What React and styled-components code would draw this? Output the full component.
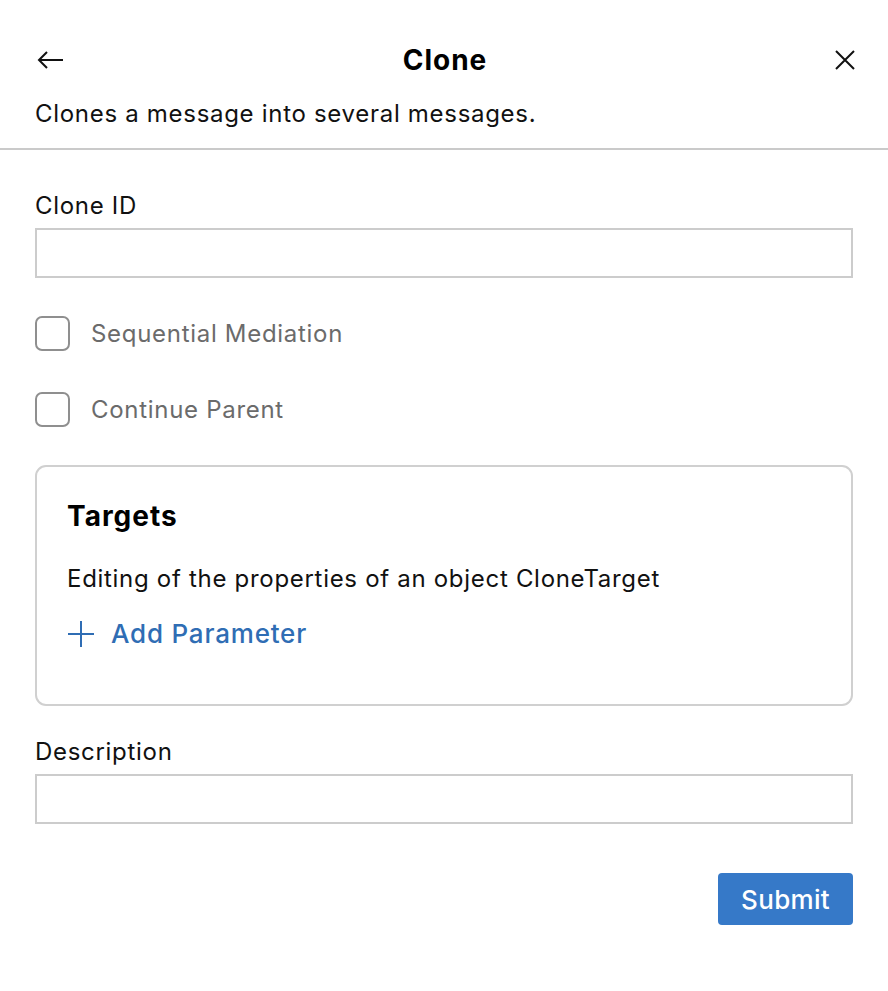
import React from "react";
import styled, { createGlobalStyle } from "styled-components";

const Global = createGlobalStyle`
  html, body { margin: 0; padding: 0; background: #fff; }
  body { font-family: Inter, "Noto Sans", sans-serif; color: #111; }
  * { box-sizing: border-box; }
`;

const Page = styled.div`
  width: 888px;
  min-height: 991px;
  background: #fff;
`;

const Header = styled.header`
  border-bottom: 2px solid #cacaca;
  padding: 0 33px 18px 35px;
`;

const TopBar = styled.div`
  display: grid;
  grid-template-columns: 40px 1fr 40px;
  align-items: center;
  height: 60px;
  margin-top: 30px;
`;

const IconButton = styled.button`
  border: none;
  background: none;
  padding: 0;
  width: 40px;
  height: 40px;
  display: flex;
  align-items: center;
  justify-content: ${(p) => (p.$end ? "flex-end" : "flex-start")};
  color: #111;
  cursor: pointer;
`;

const Title = styled.h1`
  margin: 0;
  text-align: center;
  font-size: 28px;
  letter-spacing: 1px;
  font-weight: 700;
  color: #000;
`;

const Text = styled.p`
  margin: ${(p) => p.$mt || 0}px 0 0;
  font-size: 24px;
  letter-spacing: 0.7px;
  line-height: 32px;
  color: #111;
`;

const Form = styled.div`
  padding: 40px 35px 0;
  display: flex;
  flex-direction: column;
`;

const Label = styled.label`
  font-size: 24px;
  letter-spacing: 0.7px;
  line-height: 32px;
  color: #111;
  margin-bottom: 6px;
`;

const TextInput = styled.input`
  width: 100%;
  height: 50px;
  border: 2px solid #cccccc;
  border-radius: 0;
  outline: none;
  font: inherit;
  font-size: 24px;
  padding: 0 12px;
`;

const CheckRow = styled.label`
  display: flex;
  align-items: center;
  gap: 21px;
  margin-top: ${(p) => p.$mt}px;
  cursor: pointer;
`;

const Box = styled.span`
  width: 35px;
  height: 35px;
  border: 2px solid #8f8f8f;
  border-radius: 7px;
  flex: none;
`;

const CheckText = styled.span`
  font-size: 24px;
  letter-spacing: 0.7px;
  line-height: 32px;
  color: #6b6b6b;
`;

const Card = styled.section`
  margin-top: 38px;
  border: 2px solid #d0d0d0;
  border-radius: 11px;
  padding: 31px 30px 54px;
`;

const CardTitle = styled.h2`
  margin: 0;
  font-size: 28px;
  letter-spacing: 1px;
  line-height: 36px;
  font-weight: 700;
  color: #000;
`;

const AddLink = styled.button`
  margin-top: 23px;
  border: none;
  background: none;
  padding: 0;
  display: flex;
  align-items: center;
  gap: 16px;
  color: #2f6db4;
  font: inherit;
  font-size: 26px;
  letter-spacing: 0.8px;
  font-weight: 500;
  line-height: 32px;
  cursor: pointer;
`;

const Footer = styled.div`
  display: flex;
  justify-content: flex-end;
  margin-top: 49px;
`;

const Submit = styled.button`
  width: 135px;
  height: 52px;
  border: none;
  border-radius: 4px;
  background: #3679c8;
  color: #fff;
  font: inherit;
  font-size: 26px;
  letter-spacing: 0.3px;
  font-weight: 500;
  cursor: pointer;
`;

const Section = styled.div`
  display: flex;
  flex-direction: column;
  margin-top: ${(p) => p.$mt || 0}px;
`;

export default function App() {
  return (
    <Page>
      <Global />
      <Header>
        <TopBar>
          <IconButton aria-label="Back">
            <svg width="28" height="22" viewBox="0 0 28 22" fill="none" stroke="#111" strokeWidth="2">
              <path d="M28 11H4M12 3L4 11l8 8" />
            </svg>
          </IconButton>
          <Title>Clone</Title>
          <IconButton aria-label="Close" $end>
            <svg width="20" height="20" viewBox="0 0 20 20" fill="none" stroke="#111" strokeWidth="2">
              <path d="M1 1l18 18M19 1L1 19" />
            </svg>
          </IconButton>
        </TopBar>
        <Text $mt={8}>Clones a message into several messages.</Text>
      </Header>
      <Form>
        <Section>
          <Label>Clone ID</Label>
          <TextInput />
        </Section>
        <CheckRow $mt={38}>
          <Box />
          <CheckText>Sequential Mediation</CheckText>
        </CheckRow>
        <CheckRow $mt={41}>
          <Box />
          <CheckText>Continue Parent</CheckText>
        </CheckRow>
        <Card>
          <CardTitle>Targets</CardTitle>
          <Text $mt={29}>Editing of the properties of an object CloneTarget</Text>
          <AddLink>
            <svg width="28" height="28" viewBox="0 0 28 28" fill="none" stroke="#2f6db4" strokeWidth="2">
              <path d="M14 1v26M1 14h26" />
            </svg>
            Add Parameter
          </AddLink>
        </Card>
        <Section $mt={30}>
          <Label>Description</Label>
          <TextInput />
        </Section>
        <Footer>
          <Submit>Submit</Submit>
        </Footer>
      </Form>
    </Page>
  );
}
